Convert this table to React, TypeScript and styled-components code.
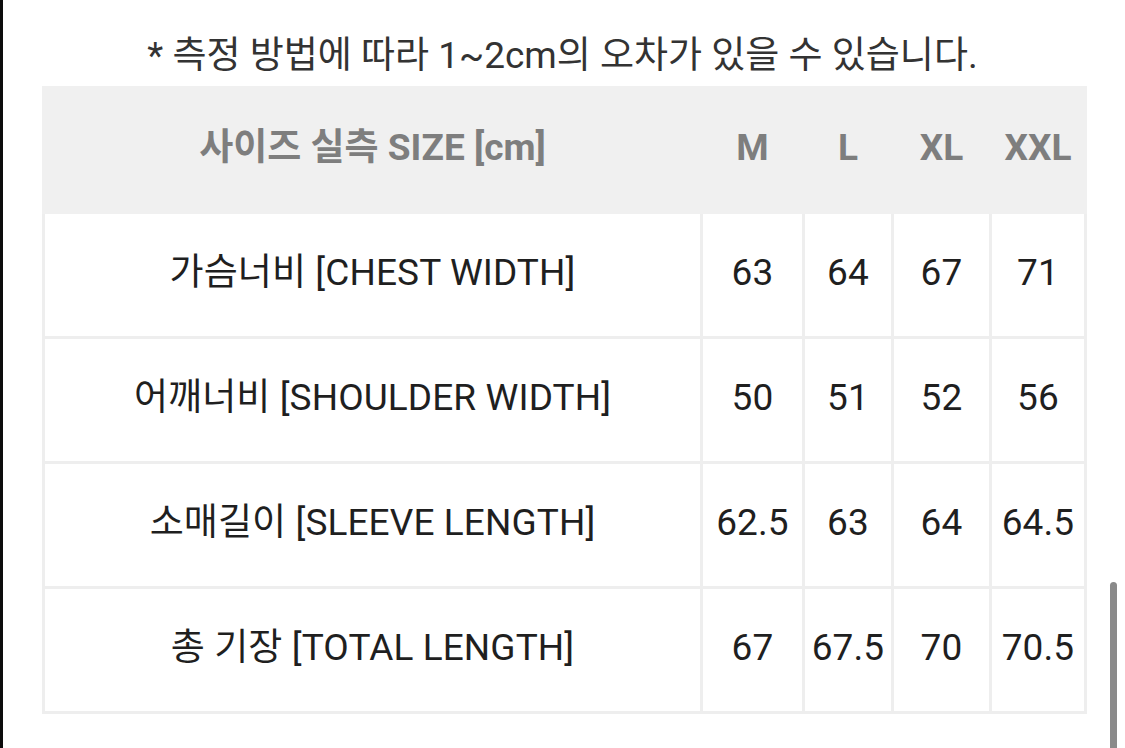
import styled, { createGlobalStyle } from 'styled-components'

const GlobalStyle = createGlobalStyle`
  html, body {
    margin: 0;
    padding: 0;
    background: #ffffff;
  }
  body {
    font-family: Roboto, "Noto Sans CJK KR", sans-serif;
  }
`

const sizes = ['M', 'L', 'XL', 'XXL']

const rows = [
  { label: '가슴너비 [CHEST WIDTH]', values: ['63', '64', '67', '71'] },
  { label: '어깨너비 [SHOULDER WIDTH]', values: ['50', '51', '52', '56'] },
  { label: '소매길이 [SLEEVE LENGTH]', values: ['62.5', '63', '64', '64.5'] },
  { label: '총 기장 [TOTAL LENGTH]', values: ['67', '67.5', '70', '70.5'] }
]

const colWidths = [658, 102, 89, 98, 95]

const App = () => (
  <>
    <GlobalStyle />
    <Screen>
      <Note>* 측정 방법에 따라 1~2cm의 오차가 있을 수 있습니다.</Note>
      <SizeTable>
        <colgroup>
          {colWidths.map((w, i) => (
            <col key={i} style={{ width: w }} />
          ))}
        </colgroup>
        <thead>
          <tr>
            <HeadCell>사이즈 실측 SIZE [cm]</HeadCell>
            {sizes.map((s) => (
              <HeadCell key={s}>{s}</HeadCell>
            ))}
          </tr>
        </thead>
        <tbody>
          {rows.map((row) => (
            <tr key={row.label}>
              <Cell>{row.label}</Cell>
              {row.values.map((v, i) => (
                <Cell key={i}>{v}</Cell>
              ))}
            </tr>
          ))}
        </tbody>
      </SizeTable>
      <ScrollThumb />
    </Screen>
  </>
)

export default App

const Screen = styled.div`
  position: relative;
  box-sizing: border-box;
  width: 1125px;
  height: 748px;
  overflow: hidden;
  border-left: 3px solid #0c0c0c;
  background: #ffffff;
`

const Note = styled.div`
  box-sizing: border-box;
  height: 86px;
  padding-top: 35px;
  line-height: 42px;
  font-size: 37px;
  color: #333333;
  text-align: center;
  margin-left: -3px;
  white-space: nowrap;
`

const SizeTable = styled.table`
  margin-left: 39px;
  width: 1042px;
  table-layout: fixed;
  border-collapse: collapse;
  font-size: 37px;
  line-height: 1.1;

  tr {
    height: 125px;
  }
`

const HeadCell = styled.th`
  padding: 0 0 4px;
  background: #f0f0f0;
  border: 3px solid #f0f0f0;
  color: #7e7e7e;
  font-weight: 700;
  text-align: center;
  white-space: nowrap;
`

const Cell = styled.td`
  padding: 0 0 4px;
  border: 3px solid #eeeeee;
  color: #1f1f1f;
  text-align: center;
  white-space: nowrap;
  letter-spacing: 0.1px;
`

const ScrollThumb = styled.div`
  position: absolute;
  right: 8px;
  top: 582px;
  width: 7px;
  height: 180px;
  border-radius: 4px;
  background: #8a8a8a;
`
